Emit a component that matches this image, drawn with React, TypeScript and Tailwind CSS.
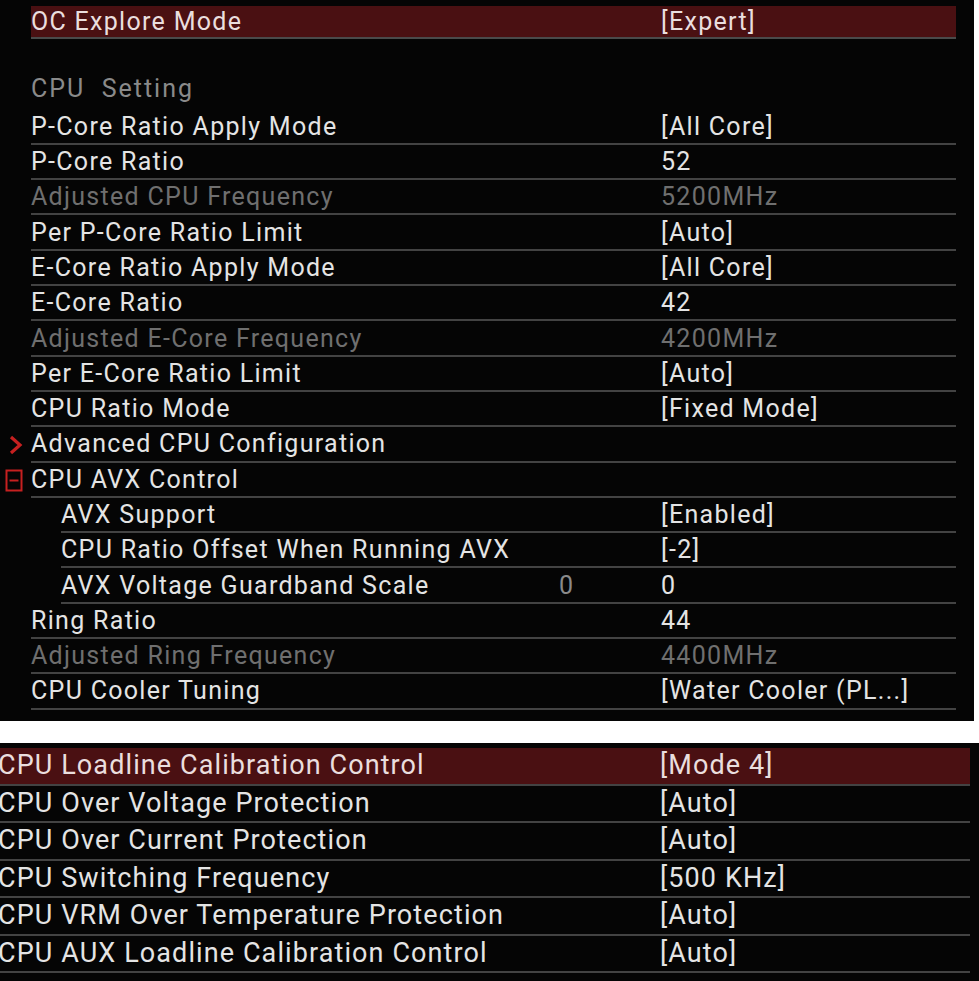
import React from 'react';

type Row = {
    label: string;
    value?: string;
    dim?: boolean;
    indent?: boolean;
    marker?: 'arrow' | 'minus';
    extra?: string;
};

const topRows: Row[] = [
    { label: 'P-Core Ratio Apply Mode', value: '[All Core]' },
    { label: 'P-Core Ratio', value: '52' },
    { label: 'Adjusted CPU Frequency', value: '5200MHz', dim: true },
    { label: 'Per P-Core Ratio Limit', value: '[Auto]' },
    { label: 'E-Core Ratio Apply Mode', value: '[All Core]' },
    { label: 'E-Core Ratio', value: '42' },
    { label: 'Adjusted E-Core Frequency', value: '4200MHz', dim: true },
    { label: 'Per E-Core Ratio Limit', value: '[Auto]' },
    { label: 'CPU Ratio Mode', value: '[Fixed Mode]' },
    { label: 'Advanced CPU Configuration', marker: 'arrow' },
    { label: 'CPU AVX Control', marker: 'minus' },
    { label: 'AVX Support', value: '[Enabled]', indent: true },
    { label: 'CPU Ratio Offset When Running AVX', value: '[-2]', indent: true },
    { label: 'AVX Voltage Guardband Scale', value: '0', indent: true, extra: '0' },
    { label: 'Ring Ratio', value: '44' },
    { label: 'Adjusted Ring Frequency', value: '4400MHz', dim: true },
    { label: 'CPU Cooler Tuning', value: '[Water Cooler (PL...]' },
];

const bottomRows = [
    { label: 'CPU Loadline Calibration Control', value: '[Mode 4]', active: true },
    { label: 'CPU Over Voltage Protection', value: '[Auto]' },
    { label: 'CPU Over Current Protection', value: '[Auto]' },
    { label: 'CPU Switching Frequency', value: '[500 KHz]' },
    { label: 'CPU VRM Over Temperature Protection', value: '[Auto]' },
    { label: 'CPU AUX Loadline Calibration Control', value: '[Auto]' },
];

const font = { fontFamily: 'Roboto, "Liberation Sans", sans-serif' };

const Marker = ({ kind }: { kind: 'arrow' | 'minus' }) =>
    kind === 'arrow' ? (
        <svg width="14" height="20" viewBox="0 0 14 20" className="absolute left-[9px] top-[8px]">
            <path d="M2 2 L11 10 L2 18" fill="none" stroke="#c62020" strokeWidth="3.2" />
        </svg>
    ) : (
        <svg width="18" height="23" viewBox="0 0 18 23" className="absolute left-[5px] top-[6px]">
            <rect x="1.5" y="1.5" width="15" height="20" fill="none" stroke="#c62020" strokeWidth="2" />
            <path d="M4.5 11.5 H13.5" stroke="#c62020" strokeWidth="2" />
        </svg>
    );

const TopRow = ({ row }: { row: Row }) => (
    <div className="relative h-[35.3px]">
        {row.marker && <Marker kind={row.marker} />}
        <div
            className={`flex items-center h-full border-b-2 border-[#434343] mr-[18px] ${row.indent ? 'ml-[61px]' : 'ml-[31px]'}`}
        >
            <span className={`flex-1 ${row.dim ? 'text-[#6f6f6f]' : 'text-[#e4e4e4]'}`}>{row.label}</span>
            {row.extra && <span className="w-[102px] text-[#8a8a8a]">{row.extra}</span>}
            <span className={`w-[295px] ${row.dim ? 'text-[#6f6f6f]' : 'text-[#e4e4e4]'}`}>{row.value}</span>
        </div>
    </div>
);

export default function App() {
    return (
        <div className="bg-white w-[979px] h-[981px] overflow-hidden" style={font}>
            {/* top panel */}
            <div className="bg-[#050505] w-[974px] h-[721px] pt-[6px] text-[25px] tracking-[1.3px] leading-none">
                <div className="h-[33px] ml-[31px] mr-[18px] border-b-2 border-[#4a4a4a]">
                    <div className="flex items-center h-full bg-[#4a1012] text-[#eadede]">
                        <span className="flex-1">OC Explore Mode</span>
                        <span className="w-[295px]">[Expert]</span>
                    </div>
                </div>
                <div className="h-[35.3px]" />
                <div className="h-[35.3px] ml-[31px] flex items-center pb-[6px] text-[#8a8a8a] tracking-[2px] whitespace-pre">
                    CPU  Setting
                </div>
                {topRows.map((row) => (
                    <TopRow key={row.label} row={row} />
                ))}
            </div>

            {/* bottom panel */}
            <div className="bg-[#050505] mt-[22px] h-[238px] pt-[5px] text-[27px] tracking-[1.1px] leading-none">
                {bottomRows.map((row) => (
                    <div key={row.label} className="h-[37.5px] mr-[9px] border-b-2 border-[#434343]">
                        <div
                            className={`flex items-center h-full ${row.active ? 'bg-[#4a1012] text-[#eadede]' : 'text-[#e4e4e4]'}`}
                        >
                            <span className="flex-1 -ml-[2px]">{row.label}</span>
                            <span className="w-[310px]">{row.value}</span>
                        </div>
                    </div>
                ))}
            </div>
        </div>
    );
}
